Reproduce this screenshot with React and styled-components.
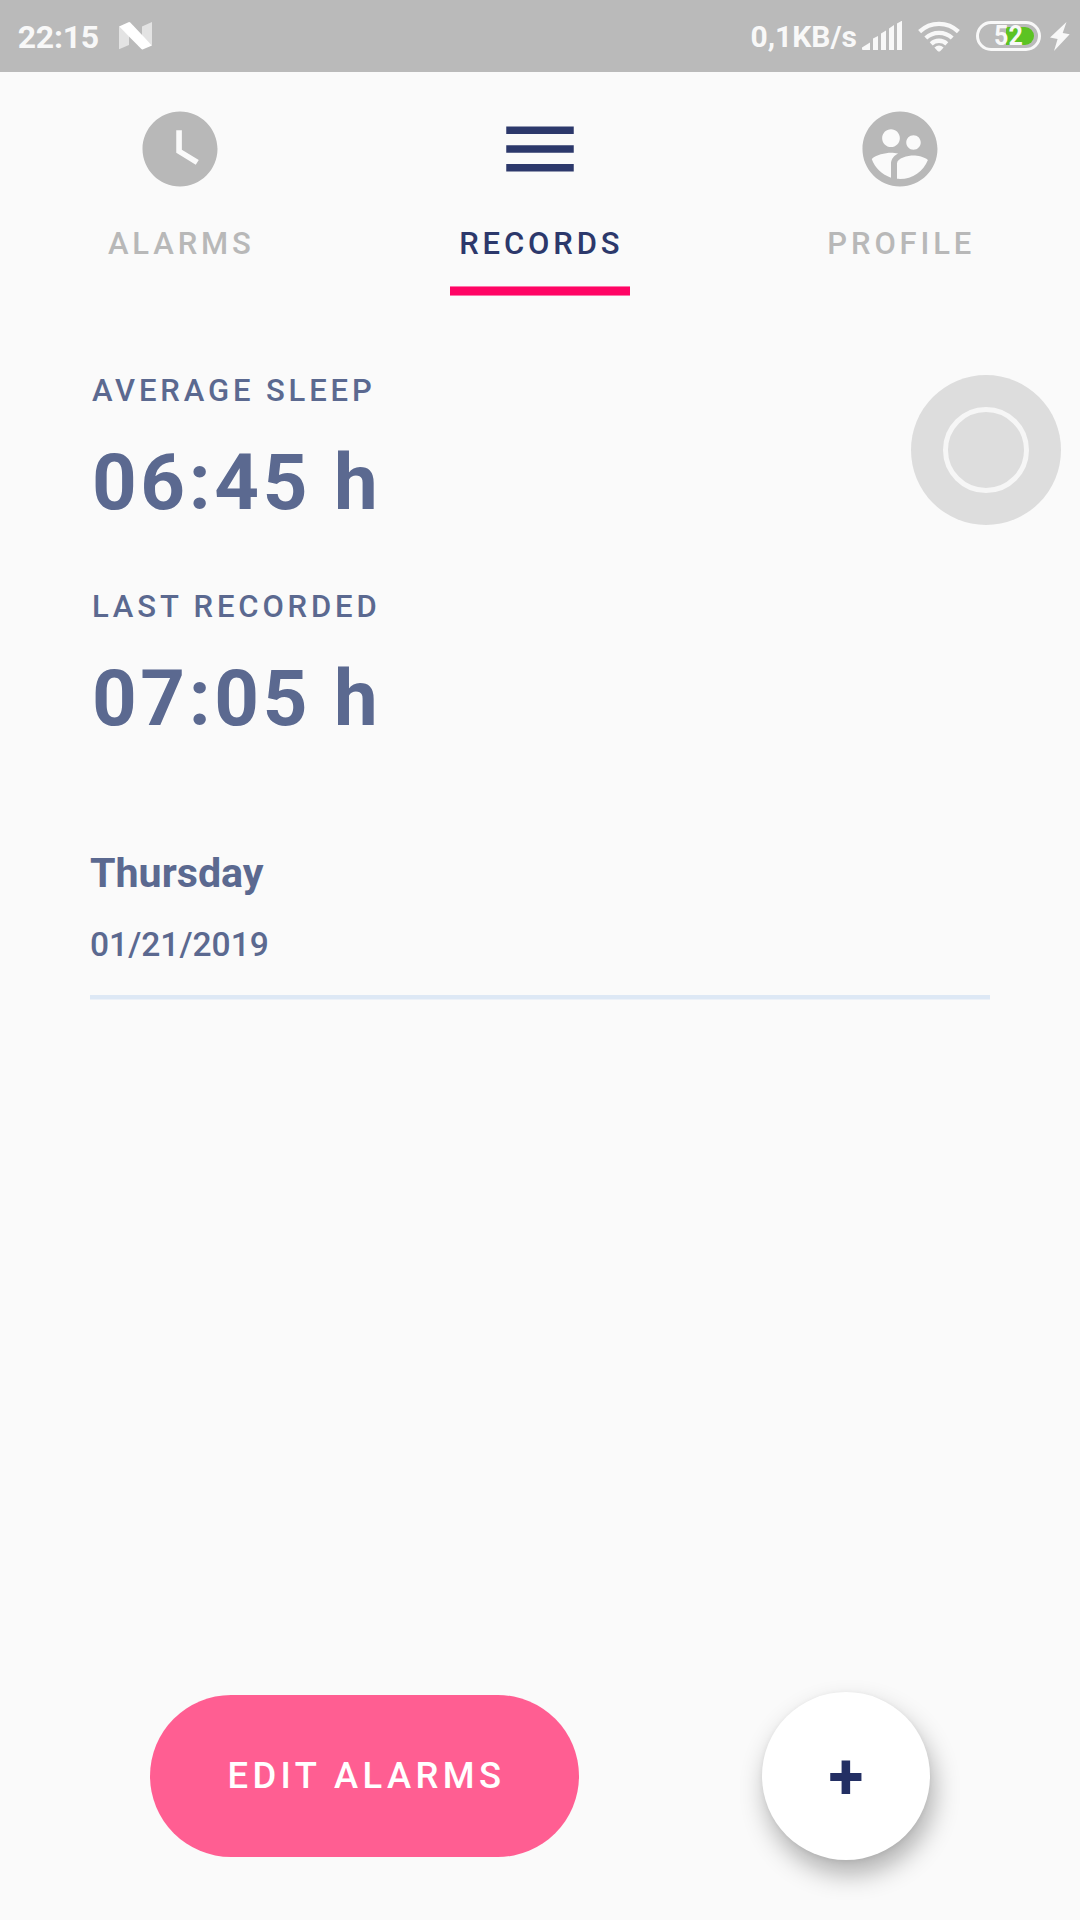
import React from "react";
import styled, { createGlobalStyle } from "styled-components";

const colors = {
  page: "#fafafa",
  statusBar: "#bababa",
  statusInk: "#f8f8f8",
  charge: "#5cc323",
  muted: "#b8b8b8",
  navy: "#2c386b",
  slate: "#5b6990",
  accent: "#ff0464",
  button: "#ff5e92",
  rule: "#dde8f5",
};

const GlobalStyle = createGlobalStyle`
  * { box-sizing: border-box; }
  body { margin: 0; background: ${colors.page}; }
`;

const Screen = styled.div`
  position: relative;
  display: flex;
  flex-direction: column;
  width: 1080px;
  height: 1920px;
  overflow: hidden;
  background: ${colors.page};
  font-family: Roboto, "Liberation Sans", sans-serif;
`;

const StatusBar = styled.header`
  display: flex;
  align-items: center;
  height: 72px;
  flex: none;
  padding: 0 10.5px 0 17.7px;
  background: ${colors.statusBar};
  color: ${colors.statusInk};
`;

const Clock = styled.span`
  width: 101.3px;
  margin-top: 2px;
  font-size: 32px;
  line-height: 38px;
  font-weight: 700;
  letter-spacing: -0.25px;
`;

const NetworkSpeed = styled.span`
  margin: 1px 5px 0 auto;
  font-size: 30px;
  line-height: 35px;
  font-weight: 700;
`;

const StatusGlyph = styled.svg`
  display: block;
  flex: none;
  margin-left: ${(p) => p.$gap || 0}px;
`;

const Battery = styled.div`
  position: relative;
  display: flex;
  align-items: center;
  justify-content: center;
  width: 65px;
  height: 30px;
  margin-left: 15.5px;
  border: 3px solid ${colors.statusInk};
  border-radius: 15px;
`;

const Charge = styled.span`
  position: absolute;
  top: 3px;
  right: 3.5px;
  width: 28px;
  height: 18px;
  border-radius: 0 9px 9px 0;
  background: ${colors.charge};
`;

const Level = styled.span`
  position: relative;
  font-size: 27px;
  line-height: 30px;
  font-weight: 700;
  transform: scaleX(0.93);
`;

const Tabs = styled.nav`
  display: grid;
  grid-template-columns: repeat(3, 360px);
  flex: none;
`;

const Tab = styled.div`
  display: flex;
  flex-direction: column;
  align-items: center;
  height: 224px;
  padding-top: 31.75px;
  color: ${(p) => (p.$active ? colors.navy : colors.muted)};
`;

const TabIcon = styled.svg`
  display: block;
  width: 90px;
  height: 90px;
  fill: currentColor;
`;

const Label = styled.span`
  font-size: 31px;
  line-height: 37px;
  font-weight: 500;
  letter-spacing: 3.87px;
  padding-left: 1.95px;
  white-space: nowrap;
`;

const TabLabel = styled(Label)`
  margin-top: 31.25px;
  padding-left: 2.6px;
`;

const Indicator = styled.div`
  width: 180px;
  height: 10px;
  margin-top: 24px;
  border: solid rgba(255, 4, 100, 0.55);
  border-width: 1px 0;
  background: ${colors.accent};
  background-clip: padding-box;
`;

const Content = styled.main`
  display: flex;
  flex-direction: column;
  flex: 1;
  padding: 76px 90px 0;
  color: ${colors.slate};
`;

const Stats = styled.section`
  display: flex;
  flex-direction: column;
  gap: 60px;
`;

const Stat = styled.div`
  display: flex;
  flex-direction: column;
  align-items: flex-start;
  gap: 28px;
`;

const StatValue = styled.span`
  padding-left: 2px;
  font-size: 78px;
  line-height: 91px;
  font-weight: 700;
  letter-spacing: 3.6px;
`;

const Entry = styled.article`
  display: flex;
  flex-direction: column;
  gap: 28px;
  margin-top: 105px;
  padding-bottom: 31px;
`;

const Day = styled.span`
  font-size: 41.2px;
  line-height: 48px;
  font-weight: 700;
`;

const DateText = styled.span`
  font-size: 33.6px;
  line-height: 39px;
  font-weight: 500;
`;

const Divider = styled.div`
  height: 5px;
  background: ${colors.rule};
  background-clip: padding-box;
  border-bottom: 1px solid rgba(221, 232, 245, 0.5);
`;

const Actions = styled.footer`
  display: flex;
  align-items: center;
  gap: 183px;
  flex: none;
  padding: 0 150px 60px;
`;

const EditButton = styled.button`
  width: 429px;
  height: 162px;
  border: 0;
  border-radius: 81px;
  padding: 0 0 0 4px;
  background: ${colors.button};
  color: #fff;
  font: 500 36.4px/44px Roboto, "Liberation Sans", sans-serif;
  letter-spacing: 4.42px;
`;

const AddButton = styled.button`
  display: flex;
  align-items: center;
  justify-content: center;
  width: 168px;
  height: 168px;
  border: 0;
  border-radius: 50%;
  padding: 2px 0 0;
  background: #fff;
  color: #232f63;
  font: 700 64px/75px Roboto, "Liberation Sans", sans-serif;
  box-shadow: 4px 14px 26px rgba(0, 0, 0, 0.3), 0 1px 5px rgba(0, 0, 0, 0.06);
`;

const AssistTouch = styled.div`
  position: absolute;
  top: 375px;
  left: 911px;
  display: flex;
  align-items: center;
  justify-content: center;
  width: 150px;
  height: 150px;
  border-radius: 50%;
  background: #dddddd;
`;

const AssistRing = styled.div`
  width: 86px;
  height: 86px;
  border: 5.5px solid #f6f6f6;
  border-radius: 50%;
`;

const tabs = [
  {
    label: "ALARMS",
    path: "M12 2C6.5 2 2 6.5 2 12s4.5 10 10 10 10-4.5 10-10S17.5 2 12 2zm4.2 14.2L11 13V7h1.5v5.2l4.5 2.7-.8 1.3z",
  },
  {
    label: "RECORDS",
    active: true,
    path: "M3 18h18v-2H3v2zm0-5h18v-2H3v2zm0-7v2h18V6H3z",
  },
  {
    label: "PROFILE",
    path: "M11.99 2c-5.52 0-10 4.48-10 10s4.48 10 10 10 10-4.48 10-10-4.48-10-10-10zm3.61 6.34c1.07 0 1.93.86 1.93 1.93 0 1.07-.86 1.93-1.93 1.93-1.07 0-1.93-.86-1.93-1.93-.01-1.07.86-1.93 1.93-1.93zm-6-1.58c1.3 0 2.36 1.06 2.36 2.36 0 1.3-1.06 2.36-2.36 2.36s-2.36-1.06-2.36-2.36c0-1.31 1.05-2.36 2.36-2.36zm0 9.13v3.75c-2.4-.75-4.3-2.6-5.14-4.96 1.05-1.12 3.67-1.69 5.14-1.69.53 0 1.2.08 1.9.22-1.64.87-1.9 2.02-1.9 2.68zM11.99 20c-.27 0-.53-.01-.79-.04v-4.07c0-1.42 2.94-2.13 4.4-2.13 1.07 0 2.92.39 3.84 1.15-1.17 2.97-4.06 5.09-7.45 5.09z",
  },
];

const stats = [
  { label: "AVERAGE SLEEP", value: "06:45 h" },
  { label: "LAST RECORDED", value: "07:05 h" },
];

function NougatLogo() {
  return (
    <StatusGlyph width="33" height="28" viewBox="0 0 33 28">
      <path d="M0 4.5 10 14v9L0 27.3z" fill="#e3e3e3" />
      <path d="M23 4.5 33 0v23.5L23 14z" fill="#e3e3e3" />
      <path d="M0 4.5 9.5.2q1-.4 1.8.4L33 23.4 23.6 27.4q-.6.2-1.2-.3z" fill="#fff" />
    </StatusGlyph>
  );
}

function Signal() {
  return (
    <StatusGlyph width="40" height="30" viewBox="0 0 40 30" fill={colors.statusInk}>
      <path d="M0 26.500 8 21.500V29H1q-1 0-1-1z" />
      <path d="M11 17.500 16 15v14h-5zM19 12.500l5-3V29h-5zM27 7.500l5-3.500V29h-5zM35 2.500l5-2.800V29h-5z" />
    </StatusGlyph>
  );
}

function Wifi() {
  return (
    <StatusGlyph $gap={16} width="42" height="31" viewBox="0 0 42 31">
      <g fill="none" stroke={colors.statusInk} strokeWidth="4.3">
        <path d="M1.6 10.6a28 28 0 0 1 38.8 0" />
        <path d="M7.8 17a19.5 19.5 0 0 1 26.4 0" />
        <path d="M13.2 22.8a11.5 11.5 0 0 1 15.6 0" />
      </g>
      <path d="M16.4 26.600q4.600-4 9.200 0l-3.200 3.500q-1.400 1-2.800 0z" fill={colors.statusInk} />
    </StatusGlyph>
  );
}

function Bolt() {
  return (
    <StatusGlyph $gap={9} width="20" height="29" viewBox="0 0 20 29">
      <path d="M16.500 0 0 15.600l7.600 1.400-3.600 12L19.700 12.200l-7-1.200z" fill={colors.statusInk} />
    </StatusGlyph>
  );
}

export default function App() {
  return (
    <Screen>
      <GlobalStyle />
      <StatusBar>
        <Clock>22:15</Clock>
        <NougatLogo />
        <NetworkSpeed>0,1KB/s</NetworkSpeed>
        <Signal />
        <Wifi />
        <Battery>
          <Charge />
          <Level>52</Level>
        </Battery>
        <Bolt />
      </StatusBar>

      <Tabs>
        {tabs.map((tab) => (
          <Tab key={tab.label} $active={tab.active}>
            <TabIcon viewBox="0 0 24 24">
              <path d={tab.path} />
            </TabIcon>
            <TabLabel>{tab.label}</TabLabel>
            {tab.active && <Indicator />}
          </Tab>
        ))}
      </Tabs>

      <Content>
        <Stats>
          {stats.map((stat) => (
            <Stat key={stat.label}>
              <Label>{stat.label}</Label>
              <StatValue>{stat.value}</StatValue>
            </Stat>
          ))}
        </Stats>
        <Entry>
          <Day>Thursday</Day>
          <DateText>01/21/2019</DateText>
        </Entry>
        <Divider />
      </Content>

      <Actions>
        <EditButton>EDIT ALARMS</EditButton>
        <AddButton aria-label="Add">+</AddButton>
      </Actions>

      <AssistTouch>
        <AssistRing />
      </AssistTouch>
    </Screen>
  );
}
